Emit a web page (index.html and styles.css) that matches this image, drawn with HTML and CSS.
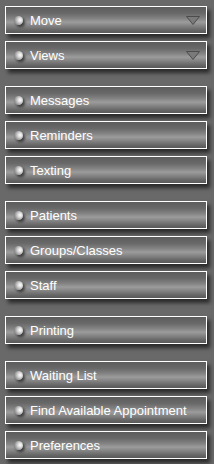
FILE: index.html
```html
<!DOCTYPE html>
<html>
<head>
<meta charset="utf-8">
<link rel="stylesheet" href="styles.css">
</head>
<body>
<div class="menu">
  <div class="group">
    <div class="btn"><span class="led"></span><span class="label">Move</span><svg class="arrow" viewBox="0 0 14 9" width="14" height="9"><path d="M0.5 0.5 H13.5 L7 8.5 Z" fill="#7a7a7a" stroke="#4c4c4c" stroke-width="1"/></svg></div>
    <div class="btn"><span class="led"></span><span class="label">Views</span><svg class="arrow" viewBox="0 0 14 9" width="14" height="9"><path d="M0.5 0.5 H13.5 L7 8.5 Z" fill="#7a7a7a" stroke="#4c4c4c" stroke-width="1"/></svg></div>
  </div>
  <div class="group">
    <div class="btn"><span class="led"></span><span class="label">Messages</span></div>
    <div class="btn"><span class="led"></span><span class="label">Reminders</span></div>
    <div class="btn"><span class="led"></span><span class="label">Texting</span></div>
  </div>
  <div class="group">
    <div class="btn"><span class="led"></span><span class="label">Patients</span></div>
    <div class="btn"><span class="led"></span><span class="label">Groups/Classes</span></div>
    <div class="btn"><span class="led"></span><span class="label">Staff</span></div>
  </div>
  <div class="group">
    <div class="btn"><span class="led"></span><span class="label">Printing</span></div>
  </div>
  <div class="group">
    <div class="btn"><span class="led"></span><span class="label">Waiting List</span></div>
    <div class="btn"><span class="led"></span><span class="label">Find Available Appointment</span></div>
    <div class="btn"><span class="led"></span><span class="label">Preferences</span></div>
  </div>
</div>
</body>
</html>
```
FILE: styles.css
```css
html, body {
  margin: 0;
  padding: 0;
  background: #696969;
  width: 214px;
  height: 464px;
  overflow: hidden;
}
body {
  font-family: "Liberation Sans", Arial, sans-serif;
}
.menu {
  display: flex;
  flex-direction: column;
  gap: 17px;
  padding: 6px 0 0 5px;
}
.group {
  display: flex;
  flex-direction: column;
  gap: 7px;
}
.btn {
  box-sizing: border-box;
  width: 202px;
  height: 28px;
  border: 1px solid #ffffff;
  display: flex;
  align-items: center;
  padding-left: 8px;
  background: linear-gradient(to bottom, #5c5c5c 0%, #696969 25%, #848484 45%, #9c9c9c 58%, #848484 72%, #646464 90%, #595959 100%);
  box-shadow: 3px 4px 4px rgba(0, 0, 0, 0.6);
}
.led {
  flex: none;
  width: 9px;
  height: 9px;
  border-radius: 50%;
  background: radial-gradient(circle at 68% 45%, #ffffff 0%, #e0e0e0 25%, #8f8f8f 70%, #555555 100%);
  box-shadow: 2px 2px 3px rgba(0, 0, 0, 0.6);
  margin-right: 7px;
  margin-top: 1px;
}
.label {
  color: #ffffff;
  font-size: 13px;
  line-height: 16px;
  white-space: nowrap;
  flex: 1;
  margin-top: 1px;
}
.arrow {
  flex: none;
  margin-right: 6px;
}
```
